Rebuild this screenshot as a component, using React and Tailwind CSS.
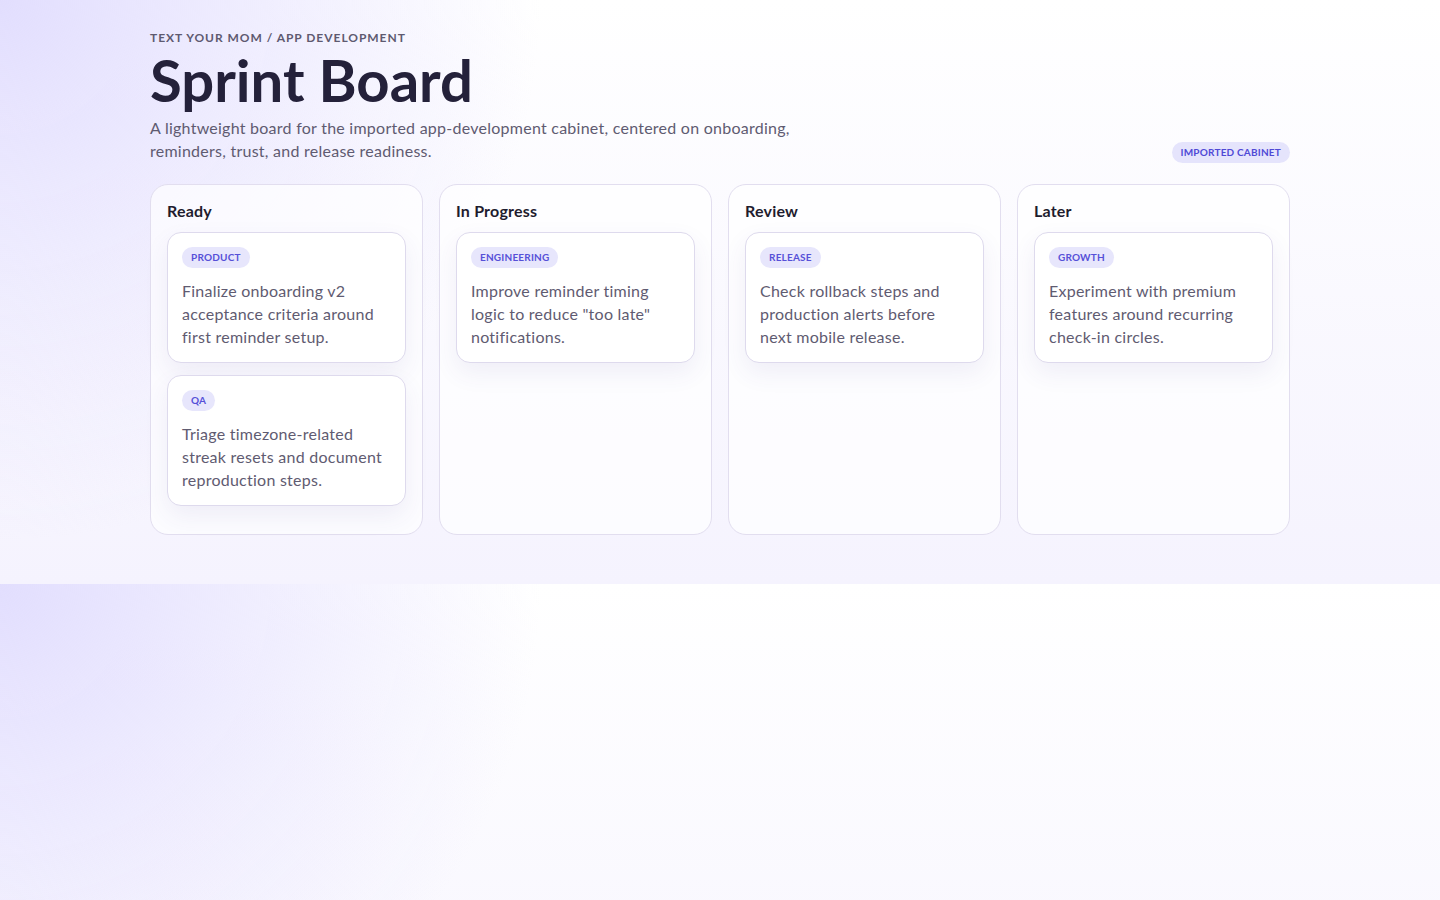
import React from 'react';

const columns = [
  {
    title: 'Ready',
    cards: [
      { tag: 'Product', text: 'Finalize onboarding v2 acceptance criteria around first reminder setup.' },
      { tag: 'QA', text: 'Triage timezone-related streak resets and document reproduction steps.' },
    ],
  },
  {
    title: 'In Progress',
    cards: [
      { tag: 'Engineering', text: 'Improve reminder timing logic to reduce "too late" notifications.' },
    ],
  },
  {
    title: 'Review',
    cards: [
      { tag: 'Release', text: 'Check rollback steps and production alerts before next mobile release.' },
    ],
  },
  {
    title: 'Later',
    cards: [
      { tag: 'Growth', text: 'Experiment with premium features around recurring check-in circles.' },
    ],
  },
];

function TaskCard({ card }) {
  return (
    <div className="rounded-[14px] border border-[#dedaed] bg-white p-[14px] shadow-[0_10px_24px_rgba(80,70,150,0.08)]">
      <span className="flex h-[21px] w-fit items-center rounded-full bg-[#e7e6fc] px-[9px] text-[10px] font-bold uppercase tracking-[0.2px] text-[#5650d8]">
        {card.tag}
      </span>
      <p className="mt-[11px] text-[16px] leading-[23px] tracking-[0.25px] text-[#5f5b71]">{card.text}</p>
    </div>
  );
}

function Column({ column }) {
  return (
    <section className="rounded-[18px] border border-[#e2deef] bg-white/70 px-4 pt-4 pb-7">
      <h2 className="text-[16px] font-bold leading-5 tracking-[0.2px] text-[#1f1c2e]">{column.title}</h2>
      <div className="mt-[11px] flex flex-col gap-3">
        {column.cards.map((card, i) => (
          <TaskCard key={i} card={card} />
        ))}
      </div>
    </section>
  );
}

export default function App() {
  return (
    <div
      className="min-h-screen bg-[radial-gradient(circle_at_top_left,#e2defe_0,rgba(226,222,254,0)_540px),linear-gradient(180deg,#ffffff_0%,#f5f3fe_100%)] bg-[length:100%_584px] bg-repeat"
      style={{ fontFamily: 'Lato, "Noto Sans", sans-serif' }}
    >
      <div className="mx-auto w-[1140px] pt-[30px] pb-12">
        <div className="flex items-end justify-between">
          <div>
            <div className="text-[12px] font-bold uppercase leading-4 tracking-[0.08em] text-[#5e5a70]">
              Text Your Mom / App Development
            </div>
            <h1 className="mt-[5px] text-[58px] font-bold leading-[58px] text-[#24213a]">Sprint Board</h1>
            <p className="mt-[7px] max-w-[680px] text-[16px] leading-[23px] tracking-[0.25px] text-[#5f5b71]">
              A lightweight board for the imported app-development cabinet, centered on onboarding, reminders, trust,
              and release readiness.
            </p>
          </div>
          <span className="mb-[-1px] flex h-[21px] items-center rounded-full bg-[#e5e4fc] px-[9px] text-[10px] font-bold uppercase tracking-[0.2px] text-[#4f49d6]">
            Imported Cabinet
          </span>
        </div>
        <div className="mt-[22px] grid grid-cols-4 gap-4">
          {columns.map((col) => (
            <Column key={col.title} column={col} />
          ))}
        </div>
      </div>
    </div>
  );
}
